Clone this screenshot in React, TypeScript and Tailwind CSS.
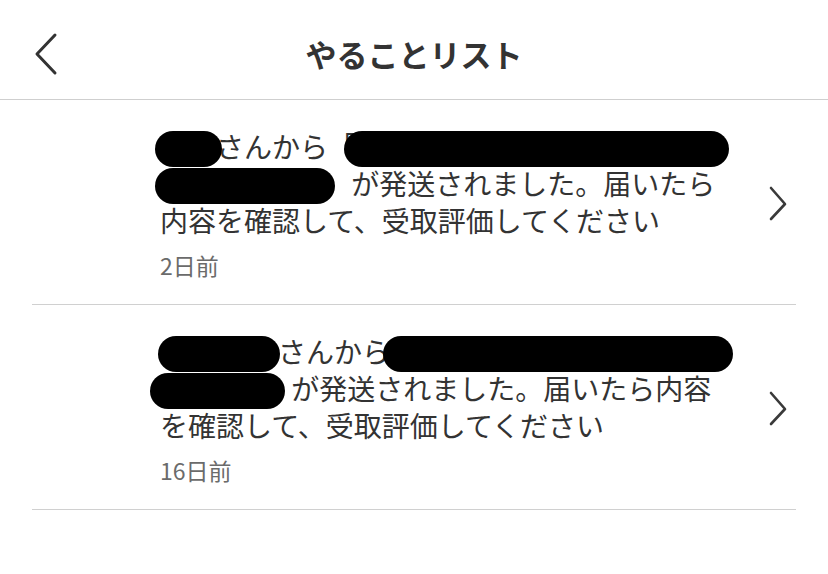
import React from 'react';

type Blob = { w: number; ml?: number; mr?: number };

interface Line {
  parts: (string | Blob)[];
}

interface Todo {
  lines: Line[];
  ago: string;
}

const todos: Todo[] = [
  {
    lines: [
      { parts: [{ w: 67, ml: -5, mr: -6 }, 'さんから「', { w: 385, ml: -12 }] },
      { parts: [{ w: 180, ml: -5, mr: -18 }, '」 が発送されました。届いたら'] },
      { parts: ['内容を確認して、受取評価してください'] },
    ],
    ago: '2日前',
  },
  {
    lines: [
      { parts: [{ w: 122, ml: -2, mr: -2 }, 'さんから', { w: 350, ml: -7 }] },
      { parts: [{ w: 135, ml: -10, mr: 0 }, ' が発送されました。届いたら内容'] },
      { parts: ['を確認して、受取評価してください'] },
    ],
    ago: '16日前',
  },
];

// black marker strokes that hide names in the screenshot
const Redaction = ({ blob }: { blob: Blob }) => (
  <span
    className="relative my-[-7px] inline-block h-[36px] rounded-full bg-black align-[-2px]"
    style={{ width: blob.w, marginLeft: blob.ml ?? 0, marginRight: blob.mr ?? 0 }}
  />
);

const TodoRow = ({ todo }: { todo: Todo }) => (
  <div className="flex items-center border-b border-[#d0d0d0] pl-[128px] pr-[9px] pt-[28px] pb-[25px]">
    <div className="flex-1">
      <div className="text-[28px] leading-[37px] text-[#333]">
        {todo.lines.map((line, i) => (
          <div key={i} className="h-[37px] whitespace-nowrap">
            {line.parts.map((p, j) =>
              typeof p === 'string' ? <span key={j}>{p}</span> : <Redaction key={j} blob={p} />
            )}
          </div>
        ))}
      </div>
      <div className="mt-[12px] h-[28px] text-[23px] leading-[28px] text-[#6b6b6b]">{todo.ago}</div>
    </div>
    <svg width="18" height="36" viewBox="0 0 18 36" fill="none">
      <path d="M2 2 L16 18 L2 33" stroke="#3a3a3a" strokeWidth="2.6" strokeLinecap="round" strokeLinejoin="round" />
    </svg>
  </div>
);

export default function App() {
  return (
    <div
      className="min-h-screen w-[828px] bg-white"
      style={{ fontFamily: '"Noto Sans CJK JP", "Noto Sans", sans-serif' }}
    >
      <header className="grid h-[100px] grid-cols-[1fr_auto_1fr] items-center border-b border-[#cfcfcf] pt-2">
        <div className="pl-[34px]">
          <svg width="24" height="44" viewBox="0 0 24 44" fill="none">
            <path d="M21 3 L3 22 L21 41" stroke="#333" strokeWidth="3" strokeLinecap="round" strokeLinejoin="round" />
          </svg>
        </div>
        <h1 className="text-[31px] font-bold leading-none text-[#333]">やることリスト</h1>
        <div />
      </header>
      <div className="px-8">
        {todos.map((t, i) => (
          <TodoRow key={i} todo={t} />
        ))}
      </div>
    </div>
  );
}
